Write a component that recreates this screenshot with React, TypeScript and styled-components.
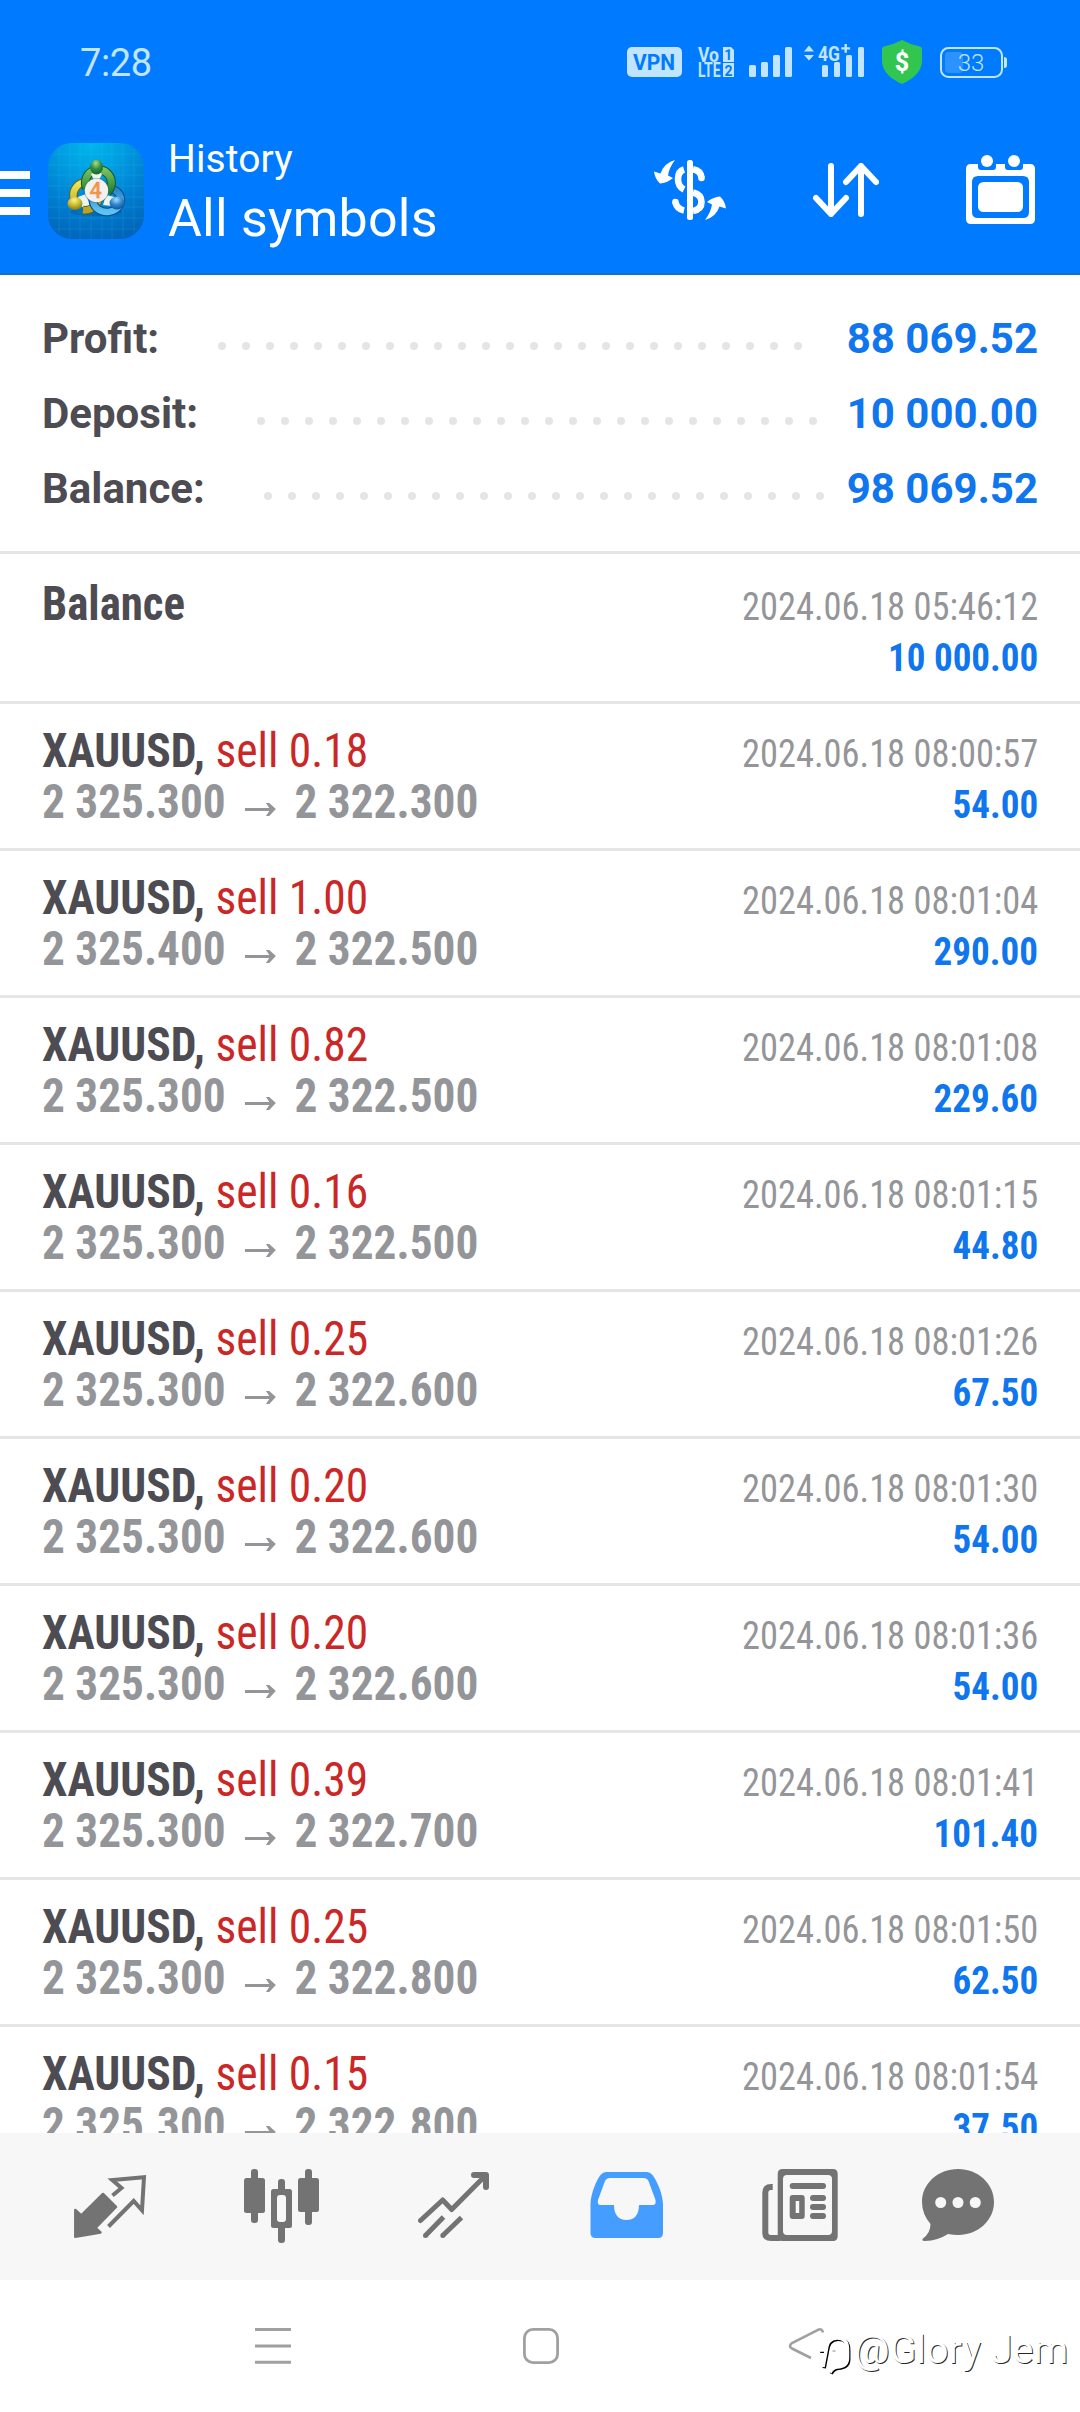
import React from "react";
import styled, { createGlobalStyle } from "styled-components";

const Global = createGlobalStyle`
  * { box-sizing: border-box; }
  body { margin: 0; background: #fff; font-family: Roboto, "Noto Sans", sans-serif; }
  svg { display: block; flex: none; }
`;

const Screen = styled.div`
  position: relative;
  width: 1080px;
  height: 2412px;
  display: flex;
  flex-direction: column;
  overflow: hidden;
  background: #fff;
`;

/* ---------- header ---------- */
const Header = styled.header`
  height: 275px;
  flex: none;
  background: #007aff;
  border-bottom: 2px solid #1470c4;
`;
const StatusBar = styled.div`
  height: 125px;
  padding: 0 69px 0 80px;
  display: flex;
  justify-content: space-between;
  color: #c2e5ff;
`;
const Clock = styled.div`
  font-size: 38px;
  line-height: 126px;
  letter-spacing: -0.4px;
`;
const StatusIcons = styled.div`
  display: flex;
  padding-top: 38px;
`;
const AppBar = styled.div`
  display: flex;
  align-items: flex-start;
  color: #fff;
`;
const MenuButton = styled.div`
  width: 30px;
  margin-top: 46px;
  display: flex;
  flex-direction: column;
  gap: 10px;
`;
const MenuBar = styled.span`
  height: 8px;
  background: #fff;
`;
const LogoBox = styled.div`
  margin: 18px 0 0 18px;
`;
const Titles = styled.div`
  flex: 1;
  margin: 10px 0 0 24px;
`;
const Subtitle = styled.div`
  font-size: 39px;
  line-height: 48px;
  letter-spacing: 0.1px;
`;
const Title = styled.div`
  font-size: 52px;
  line-height: 60px;
  padding-top: 6px;
  letter-spacing: 0.2px;
`;
const Actions = styled.div`
  display: grid;
  grid-template-columns: 159px 153px 69px;
  padding: 30px 45px 0 0;
  align-items: center;
`;

/* ---------- summary ---------- */
const Summary = styled.section`
  flex: none;
  padding: 26px 42px 25px;
  border-bottom: 3px solid #e5e5e5;
`;
const SummaryRow = styled.div`
  height: 75px;
  line-height: 75px;
  font-size: 42px;
  font-weight: 700;
  display: flex;
  color: #4d4c52;
`;
const Leader = styled.div`
  flex: 1;
  height: 8px;
  margin: 41px 21.5px 0 59px;
  display: flex;
  flex-wrap: wrap;
  gap: 16px;
  overflow: hidden;
`;
const Dot = styled.i`
  width: 8px;
  height: 8px;
  border-radius: 50%;
  background: #e5e5e5;
`;
const SummaryValue = styled.div`
  color: #0f76ee;
`;

/* ---------- deals ---------- */
const Deals = styled.main`
  flex: none;
  height: 1579px;
  overflow: hidden;
  font-family: "Roboto Condensed", Roboto, sans-serif;
  font-stretch: 75%;
`;
const Deal = styled.article<{ $first?: boolean }>`
  height: ${(p) => (p.$first ? 150 : 147)}px;
  padding: ${(p) => (p.$first ? 24 : 21)}px 42px 0;
  border-bottom: 3px solid #e5e5e5;
`;
const Line = styled.div`
  height: 51px;
  line-height: 51px;
  display: flex;
  justify-content: space-between;
  align-items: baseline;
  white-space: pre;
`;
const Symbol = styled.span<{ $narrow?: boolean }>`
  font-size: 48px;
  font-weight: 700;
  color: #4d4c52;
  transform: scaleX(${(p) => (p.$narrow ? 0.935 : 0.948)});
  transform-origin: left;
`;
const Side = styled.span`
  font-weight: 400;
  color: #cb2727;
`;
const Prices = styled.span`
  display: flex;
  align-items: baseline;
  font-size: 48px;
  font-weight: 700;
  color: #949599;
  transform: scaleX(0.943);
  transform-origin: left;
`;
const Arrow = styled.svg`
  margin: 0 19px 0 20px;
`;
const Stamp = styled.span`
  font-size: 39.5px;
  color: #949599;
  transform: scaleX(0.922);
  transform-origin: right;
`;
const Amount = styled.span`
  font-size: 39px;
  font-weight: 700;
  color: #0f76ee;
  transform: scaleX(0.95);
  transform-origin: right;
`;

/* ---------- bottom bars ---------- */
const TabBar = styled.nav`
  flex: none;
  height: 147px;
  padding: 36px 0 0 74px;
  background: #f7f7f7;
  display: grid;
  grid-template-columns: 170px 174px 172px 172px 160px 76px;
  align-items: start;
`;
const SystemBar = styled.div`
  flex: 1;
  padding: 46px 0 0 253px;
  display: grid;
  grid-template-columns: 269px 266px 40px;
  align-items: start;
`;
const Watermark = styled.div`
  position: absolute;
  left: 818px;
  top: 2323px;
  display: flex;
  align-items: center;
  font-size: 39.5px;
  line-height: 54px;
  color: #fff;
  text-shadow: 1px 1px 0 rgba(0, 0, 0, 0.85);
  white-space: pre;
  svg { margin-top: 8px; }
`;

type Row = [lots: string, close: string, time: string, amount: string, open: string];
const rows: Row[] = [
  ["0.18", "2 322.300", "08:00:57", "54.00", "2 325.300"],
  ["1.00", "2 322.500", "08:01:04", "290.00", "2 325.400"],
  ["0.82", "2 322.500", "08:01:08", "229.60", "2 325.300"],
  ["0.16", "2 322.500", "08:01:15", "44.80", "2 325.300"],
  ["0.25", "2 322.600", "08:01:26", "67.50", "2 325.300"],
  ["0.20", "2 322.600", "08:01:30", "54.00", "2 325.300"],
  ["0.20", "2 322.600", "08:01:36", "54.00", "2 325.300"],
  ["0.39", "2 322.700", "08:01:41", "101.40", "2 325.300"],
  ["0.25", "2 322.800", "08:01:50", "62.50", "2 325.300"],
  ["0.15", "2 322.800", "08:01:54", "37.50", "2 325.300"],
];
const totals = [
  ["Profit:", "88 069.52"],
  ["Deposit:", "10 000.00"],
  ["Balance:", "98 069.52"],
];

const StatusGlyphs = () => (
  <svg width="384" height="50" viewBox="627 38 384 50" fill="#c2e5ff" fontFamily="Roboto, sans-serif">
    <rect x="627" y="47" width="55" height="30" rx="5" />
    <text x="633" y="70" fontSize="22" fontWeight="700" fill="#007aff" textLength="42" lengthAdjust="spacingAndGlyphs">VPN</text>
    <text x="698" y="61.5" fontSize="20" fontWeight="700" textLength="21" lengthAdjust="spacingAndGlyphs">Vo</text>
    <text x="698" y="77" fontSize="19.5" fontWeight="700" textLength="22.5" lengthAdjust="spacingAndGlyphs">LTE</text>
    <path d="M723 47h8l3 3v12h-11zM723 63h11v14h-11z" />
    <text x="728.3" y="60" fontSize="14" fontWeight="700" fill="#007aff" textAnchor="middle">1</text>
    <text x="728.5" y="75.5" fontSize="14" fontWeight="700" fill="#007aff" textAnchor="middle">2</text>
    <rect x="749" y="65" width="7" height="12" rx="1.5" />
    <rect x="761" y="62" width="7" height="15" rx="1.5" />
    <rect x="773" y="55" width="7" height="22" rx="1.5" />
    <rect x="785" y="47" width="7" height="30" rx="1.5" />
    <path d="M804 51.500l5-6 5 6zM804 55h10l-5 5.500z" />
    <text x="818" y="60.5" fontSize="21" fontWeight="700" textLength="22" lengthAdjust="spacingAndGlyphs">4G</text>
    <path d="M844.5 44h2.400v3.200h3.200v2.400h-3.200v3.200h-2.400v-3.200h-3.200v-2.400h3.200z" />
    <rect x="822" y="65" width="6" height="12" rx="1.5" />
    <rect x="834" y="62" width="6" height="15" rx="1.5" />
    <rect x="846" y="55" width="6" height="22" rx="1.5" />
    <rect x="858" y="47" width="6" height="30" rx="1.5" />
    <path d="M902 40q9 5 18 6.500q2 .5 2 3v11c0 12-10 19-20 23.500c-10-4.500-20-11.500-20-23.500v-11q0-2.500 2-3q9-1.500 18-6.500z" fill="#32c651" />
    <text x="902" y="70.500" fontSize="25" fontWeight="800" fill="#fff" textAnchor="middle">$</text>
    <rect x="941" y="48" width="61" height="29" rx="7.500" fill="none" stroke="#c2e5ff" strokeWidth="2" />
    <rect x="945" y="52" width="18" height="21" rx="4" fill="#2b92ff" />
    <path d="M1004 57q3 0 3 2.500v6q0 2.500-3 2.500z" />
    <text x="971" y="71" fontSize="24" fontWeight="300" textAnchor="middle">33</text>
  </svg>
);

const Logo = () => (
  <svg width="96" height="96" viewBox="0 0 96 96">
    <defs>
      <radialGradient id="bg" cx=".45" cy="0" r="1.050"><stop offset="0" stopColor="#00b6ec" /><stop offset=".3" stopColor="#009fe2" /><stop offset=".6" stopColor="#0082d4" /><stop offset="1" stopColor="#0063b8" /></radialGradient>
      <linearGradient id="gr" x1="0" y1="0" x2="0" y2="1"><stop offset="0" stopColor="#7cc25e" /><stop offset="1" stopColor="#1d7f37" /></linearGradient>
      <linearGradient id="ye" x1="0" y1="0" x2="0" y2="1"><stop offset="0" stopColor="#efe658" /><stop offset="1" stopColor="#b5a524" /></linearGradient>
      <linearGradient id="bl" x1="0" y1="0" x2="0" y2="1"><stop offset="0" stopColor="#2a7fc6" /><stop offset="1" stopColor="#5cc4f5" /></linearGradient>
      <radialGradient id="hg" cx=".45" cy=".25" r=".8"><stop offset="0" stopColor="#a8dc90" /><stop offset=".5" stopColor="#2f8e42" /><stop offset="1" stopColor="#14602a" /></radialGradient>
      <radialGradient id="hy" cx=".45" cy=".25" r=".8"><stop offset="0" stopColor="#fff38c" /><stop offset=".5" stopColor="#c9b92c" /><stop offset="1" stopColor="#7d7212" /></radialGradient>
      <radialGradient id="hb" cx=".45" cy=".25" r=".8"><stop offset="0" stopColor="#a6dcff" /><stop offset=".5" stopColor="#2c84cb" /><stop offset="1" stopColor="#0c4f93" /></radialGradient>
    </defs>
    <rect width="96" height="96" rx="24" fill="url(#bg)" />
    <path d="M11 6v84M22 1v94M32 0v96M43 0v96M54 0v96M64 0v96M75 1v94M86 6v84M6 11h84M1 22h94M0 32h96M0 43h96M0 54h96M0 64h96M1 75h94M6 86h84" stroke="#55c6f5" strokeOpacity=".15" />
    <ellipse cx="48" cy="69" rx="26" ry="4" fill="#003e7e" opacity=".25" />
    <path d="M30 54l8-3 4 12-8 1zM58 52l8 2-2 9-9-1z" fill="#eef4ee" />
    <path d="M31 63A13 13 0 1 1 47 62Q43 68 35 67" fill="none" stroke="#66600f" strokeWidth="8.500" />
    <path d="M31 63A13 13 0 1 1 47 62Q43 68 35 67" fill="none" stroke="url(#ye)" strokeWidth="6.500" />
    <path d="M45 58a14 12 0 1 0 13-13" fill="none" stroke="#0b4a83" strokeWidth="8.500" />
    <path d="M45 58a14 12 0 1 0 13-13" fill="none" stroke="url(#bl)" strokeWidth="6.500" />
    <path d="M38.500 45a13 13 0 1 1 21 4" fill="none" stroke="#12592a" strokeWidth="9" />
    <path d="M38.500 45a13 13 0 1 1 21 4" fill="none" stroke="url(#gr)" strokeWidth="7" />
    <path d="M43 31q6-4 11 0l-3 6h-5z" fill="#eef8e8" />
    <ellipse cx="48.500" cy="24" rx="6.500" ry="7.500" fill="url(#hg)" />
    <ellipse cx="27" cy="60.500" rx="7.500" ry="6.500" fill="url(#hy)" />
    <ellipse cx="69" cy="60" rx="7.500" ry="6.500" fill="url(#hb)" />
    <circle cx="48.500" cy="47.500" r="12.500" fill="#3c5a4a" opacity=".45" />
    <circle cx="48.500" cy="47.500" r="11.700" fill="#f2f1ef" />
    <text x="47.500" y="55" fontSize="21.500" fontWeight="500" fill="#f09a50" stroke="#ef8a3a" strokeWidth=".3" textAnchor="middle">4</text>
  </svg>
);

const CurrencyIcon = () => (
  <svg width="72" height="60" viewBox="0 0 72 60" fill="#fff">
    <rect x="33" y="0" width="6" height="60" rx="2.500" />
    <g fill="none" stroke="#fff" strokeWidth="6.600">
      <path d="M30 9.500Q24 11.500 24 19Q24 26.500 30 29.500" />
      <path d="M39 9.300Q46.500 10.500 47.500 17.500" />
      <path d="M39 32.500Q47.500 34.500 47.500 42Q47.500 49.500 39 51" />
      <path d="M21.500 42.500Q23 49 30 50.500" />
    </g>
    <circle cx="47.500" cy="18" r="3.300" /><circle cx="21.400" cy="42" r="3.300" />
    <path d="M21 0Q10 3 6.500 13.500L0 11.500Q1 19 6 23.500Q13 23 19 18L14 15.500Q15 8 21 0Z" />
    <path d="M51 60Q62 57 65.500 46.500L72 48.500Q71 41 66 36.500Q59 37 53 42L58 44.500Q57 52 51 60Z" />
  </svg>
);
const SortIcon = () => (
  <svg width="66" height="54" viewBox="0 0 66 54" fill="none" stroke="#fff" strokeWidth="6" strokeLinecap="round" strokeLinejoin="round">
    <path d="M18 3V51M3 35L18 51L33 35M48 51V3M33 19L48 3L63 19" />
  </svg>
);
const CalendarIcon = () => (
  <svg width="69" height="69" viewBox="0 0 69 69" fill="#fff">
    <path fillRule="evenodd" d="M5 9H12V12Q12 15 15 15H27Q30 15 30 12V9H39V12Q39 15 42 15H54Q57 15 57 12V9H64Q69 9 69 14V64Q69 69 64 69H5Q0 69 0 64V14Q0 9 5 9ZM12 21Q6 21 6 27V57Q6 63 12 63H57Q63 63 63 57V27Q63 21 57 21Z" />
    <rect x="12" y="27" width="45" height="30" rx="5.500" />
    <circle cx="21" cy="6" r="6" /><circle cx="48" cy="6" r="6" />
  </svg>
);

const G = "#737373";
const QuotesTab = () => (
  <svg width="75" height="75" viewBox="0 0 75 75" fill="none">
    <path d="M38.500 26.500L47.500 19L38.300 11L70 8.300L68 41.300L59.700 32L34.500 57.500" stroke={G} strokeWidth="4" />
    <path d="M1.300 41L7.300 46.500L29 25L42 38L21.500 59L26.500 63.500L1.300 67.800Z" fill={G} stroke={G} strokeWidth="2.500" strokeLinejoin="round" />
  </svg>
);
const ChartTab = () => (
  <svg width="75" height="75" viewBox="0 0 75 75" fill={G}>
    <rect x="7" y="0" width="7" height="54" rx="3" /><rect x="0" y="9" width="21" height="35" rx="2.500" />
    <rect x="34" y="10" width="7" height="64" rx="3" /><rect x="27" y="20" width="21" height="39" rx="2.500" />
    <rect x="33" y="26" width="9" height="27" rx="3" fill="#f7f7f7" />
    <rect x="61" y="0" width="7" height="56" rx="3" /><rect x="54" y="9" width="21" height="34" rx="2.500" />
  </svg>
);
const TradeTab = () => (
  <svg width="75" height="75" viewBox="0 0 75 75" fill="none" stroke={G} strokeWidth="5">
    <path d="M2.500 51.500L24.700 31L33.700 40.500L67 7" strokeLinecap="round" strokeLinejoin="round" />
    <path d="M56 6H68V18" strokeWidth="6" strokeLinecap="round" strokeLinejoin="round" />
    <path d="M7.500 66.500L25.500 48M24.800 66.500L43.500 48.500" />
    <path d="M7.500 66.500h.01M24.800 66.500h.01" strokeLinecap="round" />
  </svg>
);
const HistoryTab = () => (
  <svg width="75" height="75" viewBox="0 0 75 75" fill="#459dff">
    <path fillRule="evenodd" d="M.5 35C1 24 6 12 10.500 6Q13 3 16 3H57Q60 3 62.500 6C67 12 72.500 24 73 35V64Q73 69 68 69H5.500Q.5 69 .5 64ZM20 9Q16.500 9 15 12L8 31Q7 36 10.500 36H24C24 45 28 51 36.500 51S49 45 49 36H62.500Q66.500 36 65.500 31L58.500 12Q57 9 53.500 9Z" />
  </svg>
);
const NewsTab = () => (
  <svg width="76" height="75" viewBox="0 0 76 75" fill={G}>
    <path fillRule="evenodd" d="M20.500 0H71Q75.700 0 75.700 5V67Q75.700 72 71 72H20.500Q15.700 72 15.700 67V5Q15.700 0 20.500 0ZM25 6Q21 6 21 10V62Q21 66 25 66H66Q70 66 70 62V10Q70 6 66 6Z" />
    <path d="M10.700 18H9Q3.300 18 3.300 24V64Q3.300 69 9 69H18" fill="none" stroke={G} strokeWidth="6" />
    <rect x="27.700" y="14" width="36.300" height="6" rx="3" />
    <path fillRule="evenodd" d="M30.700 26h9q3 0 3 3v18q0 3-3 3h-9q-3 0-3-3V29q0-3 3-3zM33.700 32v12h3.500V32z" />
    <rect x="48" y="26" width="16" height="6" rx="3" /><rect x="48" y="35" width="16" height="6" rx="3" /><rect x="48" y="44" width="16" height="6" rx="3" />
  </svg>
);
const ChatTab = () => (
  <svg width="75" height="75" viewBox="0 0 75 75" fill={G}>
    <path d="M36 0C56 0 72 14.500 72 33S56 66 36 66Q31 66 26 65Q16 71.500 3 72Q-1 72 1 69.500Q8.500 64 8.500 55Q0 45 0 33C0 14.500 16 0 36 0Z" />
    <g fill="#f7f7f7"><circle cx="18.700" cy="33.500" r="5.500" /><circle cx="36" cy="33.500" r="5.500" /><circle cx="53.300" cy="33.500" r="5.500" /></g>
  </svg>
);

export default function App() {
  return (
    <Screen>
      <Global />
      <Header>
        <StatusBar>
          <Clock>7:28</Clock>
          <StatusIcons><StatusGlyphs /></StatusIcons>
        </StatusBar>
        <AppBar>
          <MenuButton><MenuBar /><MenuBar /><MenuBar /></MenuButton>
          <LogoBox><Logo /></LogoBox>
          <Titles>
            <Subtitle>History</Subtitle>
            <Title>All symbols</Title>
          </Titles>
          <Actions><CurrencyIcon /><SortIcon /><CalendarIcon /></Actions>
        </AppBar>
      </Header>

      <Summary>
        {totals.map(([label, value]) => (
          <SummaryRow key={label}>
            <span>{label}</span>
            <Leader>{Array.from({ length: 30 }, (_, i) => <Dot key={i} />)}</Leader>
            <SummaryValue>{value}</SummaryValue>
          </SummaryRow>
        ))}
      </Summary>

      <Deals>
        <Deal $first>
          <Line><Symbol $narrow>Balance</Symbol><Stamp>2024.06.18 05:46:12</Stamp></Line>
          <Line><Prices>{"\u00a0"}</Prices><Amount>10 000.00</Amount></Line>
        </Deal>
        {rows.map(([lots, close, time, amount, open]) => (
          <Deal key={time}>
            <Line>
              <Symbol>XAUUSD, <Side>sell {lots}</Side></Symbol>
              <Stamp>2024.06.18 {time}</Stamp>
            </Line>
            <Line>
              <Prices>
                {open}
                <Arrow width="34" height="15" viewBox="0 0 34 15" fill="#949599">
                  <path d="M0 5h26l-3.500-5h3.500l7 6-7 7h-3.500l3.500-5H0z" />
                </Arrow>
                {close}
              </Prices>
              <Amount>{amount}</Amount>
            </Line>
          </Deal>
        ))}
      </Deals>

      <TabBar><QuotesTab /><ChartTab /><TradeTab /><HistoryTab /><NewsTab /><ChatTab /></TabBar>

      <SystemBar>
        <svg width="40" height="40" viewBox="253 2326 40 40" stroke="#a0a0a0" strokeWidth="3"><path d="M255 2329.600H291M255 2346H291M255 2362.300H291" /></svg>
        <svg width="40" height="40" viewBox="522 2326 40 40" fill="none" stroke="#a0a0a0" strokeWidth="2.800"><rect x="524.400" y="2329.400" width="33.200" height="33.200" rx="8.500" /></svg>
        <svg width="40" height="40" viewBox="788 2326 40 40" fill="none" stroke="#a0a0a0" strokeWidth="2.600"><path d="M823 2332.500Q822 2328 818 2329.800L792 2343Q788 2346 792 2348.500L811 2358" /></svg>
      </SystemBar>

      <Watermark>
        <svg width="36" height="46" viewBox="0 0 36 46" fill="none" strokeWidth="3.500">
          <g stroke="#000" transform="translate(1.200 1.200)">
            <path d="M1 19H7M5 36L8 20Q9 7 19 7Q29.500 7 29.500 18V27Q29.500 35.500 19 36Q14 37 12 41.500" />
          </g>
          <path stroke="#fff" d="M1 19H7M5 36L8 20Q9 7 19 7Q29.500 7 29.500 18V27Q29.500 35.500 19 36Q14 37 12 41.500" />
          <path d="M14.500 20H17.500" stroke="#888" strokeWidth="1" />
        </svg>
        @Glory Jem
      </Watermark>
    </Screen>
  );
}
